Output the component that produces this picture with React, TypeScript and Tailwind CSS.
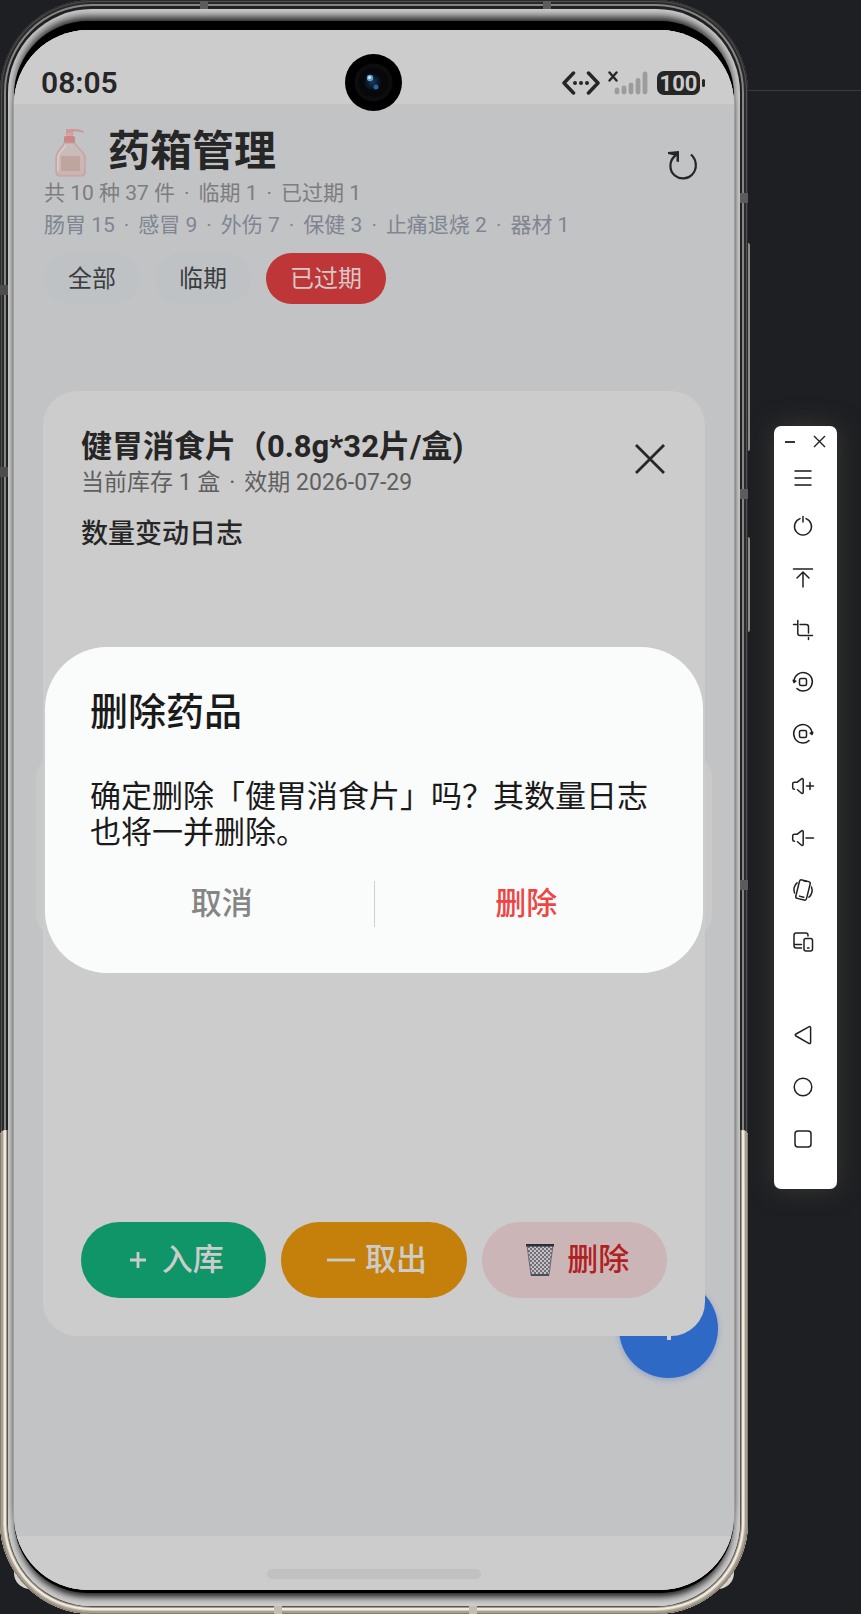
import clsx from 'clsx';
import type { ReactNode } from 'react';

const summary = ['共 10 种 37 件', '临期 1', '已过期 1'];
const categories = [
  '肠胃 15',
  '感冒 9',
  '外伤 7',
  '保健 3',
  '止痛退烧 2',
  '器材 1',
];
const stock = ['当前库存 1 盒', '效期 2026-07-29'];
const filters = ['全部', '临期', '已过期'];

function DotList({ items, className }: { items: string[]; className: string }) {
  return (
    <p className={clsx('flex gap-[9px] whitespace-nowrap leading-8', className)}>
      {items.map((item, i) => (
        <span key={item} className="flex gap-[9px]">
          {i > 0 && <span>·</span>}
          <span>{item}</span>
        </span>
      ))}
    </p>
  );
}

function LotionIcon() {
  return (
    <svg width="42" height="50" viewBox="0 0 42 50" aria-hidden="true">
      <defs>
        <linearGradient id="lotion" x1="0" y1="0" x2="0" y2="1">
          <stop offset="0" stopColor="#c9bdbb" />
          <stop offset="1" stopColor="#cdb3b0" />
        </linearGradient>
      </defs>
      <path d="M22 2h8c4 0 8 .800 10 2.500l-1 1.500c-3-1.500-6-1.800-10-1.500v4h-7z" fill="#cc9a98" />
      <rect x="23" y="6" width="5" height="5" fill="#d3a5a3" />
      <rect x="20" y="9" width="11" height="7" rx="1.500" fill="#c78886" />
      <path
        d="M20 16h11c1 5 10 8 10 15v14c0 2.500-1.500 4-4 4H16c-2.500 0-4-1.500-4-4V31c0-7 7-10 8-15z"
        fill="url(#lotion)"
        stroke="#c79d9a"
        strokeWidth="1.200"
      />
      <path d="M14 44V31c0-6 6-9 8-13" fill="none" stroke="#d8d0ce" strokeWidth="1.500" />
      <rect x="17" y="29" width="19" height="15" fill="#bfa5a0" />
    </svg>
  );
}

function TrashIcon() {
  return (
    <svg width="30" height="34" viewBox="0 0 30 34" aria-hidden="true">
      <defs>
        <pattern id="mesh" width="4" height="4" patternUnits="userSpaceOnUse">
          <path d="M0 0l4 4M4 0L0 4" stroke="#555b66" strokeWidth="0.800" />
        </pattern>
      </defs>
      <path d="M2 2h26l-4 30H6z" fill="#cbbfc3" />
      <path d="M2 2h26l-4 30H6z" fill="url(#mesh)" stroke="#666c77" />
      <path d="M1 1h28v2.500H1z" fill="#2b3038" />
      <path d="M6 32h18" stroke="#4a4f58" strokeWidth="2" />
    </svg>
  );
}

function StatusBar() {
  return (
    <div className="relative flex h-[74px] items-center justify-between bg-[#cccccc] pt-8 pr-[29px] pl-[27px]">
      <span className="text-[30px] leading-none font-semibold text-[#262626]">08:05</span>
      <div className="flex items-center">
        <svg width="38" height="24" viewBox="0 0 38 24" aria-hidden="true">
          <path
            d="M11.500 2L2 12l9.500 10M26.500 2L36 12l-9.500 10"
            fill="none"
            stroke="#262626"
            strokeWidth="3.500"
            strokeLinecap="round"
            strokeLinejoin="round"
          />
          <g fill="#262626">
            <circle cx="13" cy="12" r="2" />
            <circle cx="19" cy="12" r="2" />
            <circle cx="25" cy="12" r="2" />
          </g>
        </svg>
        <svg className="ml-2" width="40" height="24" viewBox="0 0 40 24" aria-hidden="true">
          <path d="M1.500 1.500l7 8M8.500 1.500l-7 8" stroke="#262626" strokeWidth="2.400" strokeLinecap="round" />
          <g stroke="#9c9c9c" strokeWidth="4.800" strokeLinecap="round">
            <path d="M9 19v2M16 17v4M23 14v7M30 9.500V21M37 3v18" />
          </g>
        </svg>
        <span className="ml-[9px] flex h-6 w-[43px] items-center justify-center rounded-[7px] bg-[#262626] text-[22px] font-bold text-[#cccccc]">
          100
        </span>
        <span className="ml-0.5 h-2 w-[3px] rounded-sm bg-[#262626]" />
      </div>
      <div className="absolute top-6 left-1/2 z-10 -ml-[29px] size-[57px]">
        <svg viewBox="0 0 57 57" aria-hidden="true">
          <defs>
            <radialGradient id="lens">
              <stop offset="0" stopColor="#17385c" />
              <stop offset="0.600" stopColor="#0c1c30" />
              <stop offset="1" stopColor="#07090d" />
            </radialGradient>
          </defs>
          <circle cx="28.500" cy="28.500" r="28.500" fill="#000" />
          <circle cx="28.500" cy="28.500" r="19" fill="#0c0d0f" />
          <circle cx="28.500" cy="28.500" r="15" fill="#07080a" />
          <circle cx="27.500" cy="28" r="9" fill="url(#lens)" />
          <circle cx="25" cy="24" r="3.200" fill="#5f9fd0" />
          <circle cx="24.500" cy="23.500" r="1.500" fill="#cfeaf8" />
          <circle cx="31" cy="33" r="2.500" fill="#2c64a0" />
        </svg>
      </div>
    </div>
  );
}

function CabinetPage() {
  return (
    <div className="flex flex-1 flex-col">
      <header className="px-[30px] pt-[22px]">
        <div className="flex">
          <div className="flex-1">
            <h1 className="flex h-[51px] items-center text-[42px] leading-none font-bold text-[#262626]">
              <LotionIcon />
              <span className="ml-[22px]">药箱管理</span>
            </h1>
            <DotList items={summary} className="text-[21px] text-[#7d7d7d]" />
          </div>
          <button className="flex h-20 w-[42px] items-center justify-center" aria-label="刷新">
            <svg width="32" height="32" viewBox="0 0 32 32" aria-hidden="true">
              <path
                d="M9 5C2 10 1.500 20.500 8 25.700c5 4 12.500 3.600 17-1 5.500-5.500 5-14.700-1-20.200"
                fill="none"
                stroke="#262626"
                strokeWidth="2.200"
              />
              <path d="M1 2L12 1v11L9.500 11.500V6L1 4z" fill="#262626" />
            </svg>
          </button>
        </div>
        <DotList items={categories} className="text-[21px] text-[#7f8591]" />
        <div className="mt-3 flex gap-[15px]">
          {filters.map((name, i) => (
            <button
              key={name}
              className={clsx(
                'h-[51px] rounded-full px-6 text-2xl',
                i === 2 ? 'bg-[#be3637] text-[#d6c8c8]' : 'bg-[#bfc2c4] text-[#3c3d3f]',
              )}
            >
              {name}
            </button>
          ))}
        </div>
      </header>
      <div className="flex flex-1 flex-col justify-center px-[22px] pb-[148px]">
        <div className="h-[184px] rounded-3xl bg-[#c9c9ca]" />
      </div>
      <button
        className="absolute right-4 bottom-[158px] flex size-[99px] items-center justify-center rounded-full bg-[#2f69c6] shadow-[0_2px_6px_#8fa3c8]"
        aria-label="新增药品"
      >
        <svg width="30" height="30" viewBox="0 0 30 30" aria-hidden="true">
          <path d="M15 4v22M4 15h22" stroke="#cccccc" strokeWidth="4" />
        </svg>
      </button>
    </div>
  );
}

function DetailSheet() {
  return (
    <div className="absolute inset-0 flex px-[29px] pt-[287px] pb-[200px]">
      <section className="flex flex-1 flex-col rounded-[34px] bg-[#cccccc] px-[38px] pt-9 pb-[38px]">
        <div className="flex items-start justify-between">
          <div className="whitespace-nowrap">
            <h2 className="text-[31px] leading-10 font-bold text-[#262626]">
              健胃消食片（0.8g*32片/盒)
            </h2>
            <DotList items={stock} className="text-[23px] text-[#5f5f5f]" />
          </div>
          <button className="flex h-16 w-[34px] items-center justify-center" aria-label="关闭">
            <svg width="30" height="30" viewBox="0 0 30 30" aria-hidden="true">
              <path d="M1 1l28 28M29 1L1 29" stroke="#262626" strokeWidth="2.800" />
            </svg>
          </button>
        </div>
        <h3 className="mt-[17px] text-[27px] leading-9 font-medium text-[#262626]">数量变动日志</h3>
        <div className="mt-auto flex gap-[15px] text-[31px] font-medium">
          <button className="flex h-[76px] flex-1 items-center justify-center gap-4 rounded-full bg-[#109568] pl-1.5 text-[#cccccc]">
            <svg width="16" height="16" viewBox="0 0 16 16" aria-hidden="true">
              <path d="M8 0v16M0 8h16" stroke="currentColor" strokeWidth="2.800" />
            </svg>
            入库
          </button>
          <button className="flex h-[76px] flex-1 items-center justify-center gap-2.5 rounded-full bg-[#c4800a] pl-1.5 text-[#cccccc]">
            <svg width="28" height="16" viewBox="0 0 28 16" aria-hidden="true">
              <path d="M0 8h28" stroke="currentColor" strokeWidth="2.800" />
            </svg>
            取出
          </button>
          <button className="flex h-[76px] flex-1 items-center justify-center gap-3 rounded-full bg-[#cbb5b7] pl-1.5 text-[#b12020]">
            <TrashIcon />
            删除
          </button>
        </div>
      </section>
    </div>
  );
}

function DeleteDialog() {
  return (
    <div className="absolute inset-0 flex items-center px-[31px]">
      <div
        role="alertdialog"
        aria-labelledby="delete-title"
        className="flex-1 rounded-[62px] bg-[#fafbfb] pt-10 pb-[46px] text-[#1a1a1a]"
      >
        <h2 id="delete-title" className="px-[45px] text-[38px] leading-[50px] font-medium">
          删除药品
        </h2>
        <p className="mt-[42px] px-[45px] text-[31px] leading-9">
          确定删除「健胃消食片」吗？其数量日志也将一并删除。
        </p>
        <div className="mt-[30px] flex h-[46px] px-[25px] text-[31px] font-medium">
          <button className="flex-1 text-[#858585]">取消</button>
          <span className="w-px bg-[#cfcfcf]" />
          <button className="flex-1 text-[#f04444]">删除</button>
        </div>
      </div>
    </div>
  );
}

function Phone() {
  return (
    <div className="relative flex flex-1">
      {/* window corners that peek out under the shell */}
      <div className="absolute inset-x-[14px] bottom-[25px] h-10 rounded-b-2xl bg-[#d4d4d0]" />
      <div className="relative flex flex-1 rounded-[92px] bg-[#262626] px-2 pt-[9px] pb-2 shadow-[inset_0_0_0_1px_#2b2c2e,inset_0_0_0_2px_#505050,inset_0_0_0_4px_#2a2a2a,inset_0_0_0_6px_#858585,inset_0_0_0_8px_#202020]">
        <div className="absolute inset-x-0 bottom-0 h-[30%] overflow-hidden rounded-t-md">
          <div className="absolute inset-x-0 -top-24 bottom-0 rounded-[92px] bg-[#c9c9c9] shadow-[inset_0_0_0_1px_#857d70,inset_0_0_0_3px_#a89f90,inset_0_0_0_4px_#d0c8bb,inset_0_0_0_6px_#f0ebe1,inset_0_0_0_7px_#a39a8b,inset_0_0_0_8px_#5a554d]" />
        </div>
        <span className="absolute top-px left-[200px] h-2 w-2 bg-[#5c5c5c]" />
        <span className="absolute top-px right-[197px] h-2 w-2 bg-[#5c5c5c]" />
        <span className="absolute top-[285px] left-0 h-2.5 w-2 bg-[#4c4c4c]" />
        <span className="absolute top-[467px] left-0 h-2.5 w-2 bg-[#4c4c4c]" />
        <span className="absolute top-[193px] right-0 h-2.5 w-2 bg-[#5c5c5c]" />
        <span className="absolute top-[489px] right-0 h-2.5 w-2 bg-[#5c5c5c]" />
        <span className="absolute top-[880px] right-0 h-2.5 w-2 bg-[#5c5c5c]" />
        <span className="absolute bottom-0 left-[274px] h-2 w-2 bg-[#c5beb0]" />
        <span className="absolute right-[271px] bottom-0 h-2 w-2 bg-[#c5beb0]" />
        <div className="relative flex flex-1 overflow-hidden rounded-[84px] bg-[#cdcdcd] px-1.5 pt-[21px] pb-4">
          <div className="relative flex flex-1 rounded-[74px] shadow-[0_-9px_0_#000000,0_3px_0_#000000,-1px_0_0_#a0a0a0,1px_0_0_#a0a0a0,0_-15px_8px_-2px_#1c1c1c,0_9px_7px_-2px_#1c1c1c]">
            <div className="relative flex flex-1 flex-col overflow-hidden rounded-[74px] bg-[#c2c3c5]">
              <StatusBar />
              <main className="relative flex flex-1 flex-col">
                <CabinetPage />
                <DetailSheet />
              </main>
              <div className="flex h-[54px] justify-center bg-[#cccccc] pt-[33px]">
                <span className="h-2.5 w-[214px] rounded-full bg-[#c1c1c1]" />
              </div>
              <DeleteDialog />
            </div>
          </div>
        </div>
      </div>
      <span className="absolute top-[243px] -right-0.5 h-[208px] w-0.5 rounded-r-sm bg-[#8c8c88]" />
      <span className="absolute top-[537px] -right-0.5 h-[95px] w-0.5 rounded-r-sm bg-[#8c8c88]" />
    </div>
  );
}

function Tool({ label, className, children }: { label: string; className?: string; children: ReactNode }) {
  return (
    <button
      aria-label={label}
      className={clsx('flex w-full items-center justify-center pr-[5px]', className ?? 'h-[52px]')}
    >
      <svg
        width="24"
        height="24"
        viewBox="0 0 24 24"
        fill="none"
        stroke="#202020"
        strokeWidth="1.500"
        strokeLinecap="round"
        strokeLinejoin="round"
        aria-hidden="true"
      >
        {children}
      </svg>
    </button>
  );
}

function Toolbar() {
  return (
    <div className="mr-6 ml-[26px] rounded-[7px] bg-white pb-6 shadow-[0_0_24px_#383836]">
      <div className="flex h-[30px] items-center justify-between pr-[11px] pl-[11px]">
        <button aria-label="最小化">
          <svg width="10" height="10" viewBox="0 0 10 10" aria-hidden="true">
            <path d="M0 6h10" stroke="#202020" strokeWidth="1.800" />
          </svg>
        </button>
        <button aria-label="关闭">
          <svg width="13" height="13" viewBox="0 0 13 13" aria-hidden="true">
            <path d="M1 1l11 11M12 1L1 12" stroke="#202020" strokeWidth="1.400" />
          </svg>
        </button>
      </div>
      <Tool label="菜单" className="h-11">
        <path d="M3.500 5h17M3.500 12h17M3.500 19h17" stroke="#505050" strokeWidth="1.800" strokeLinecap="butt" />
      </Tool>
      <Tool label="电源">
        <path d="M12 2.500v5.500M9 4.600a8.500 8.500 0 1 0 6 0" />
      </Tool>
      <Tool label="置顶">
        <path d="M2.500 3h19M12 6.500V21M6 12l6-6 6 6" />
      </Tool>
      <Tool label="截屏">
        <path d="M2.500 6.500h3M6.800 2.500v12.700c0 1.300 1 2.300 2.300 2.300h12.400M9 6.500h6.200c1.300 0 2.300 1 2.300 2.300v6.200M17.500 19.500v2" />
      </Tool>
      <Tool label="向左旋转">
        <path d="M3 11a9.200 9.200 0 1 1 3 7.600" />
        <path d="M2.200 10.200l.800 2.300 1.800-1.400z" fill="#202020" />
        <rect x="8.500" y="8.500" width="7" height="7" rx="1.500" />
      </Tool>
      <Tool label="向右旋转">
        <path d="M21 11a9.200 9.200 0 1 0-3 7.600" />
        <path d="M21.800 10.200l-.800 2.300-1.800-1.400z" fill="#202020" />
        <rect x="8.500" y="8.500" width="7" height="7" rx="1.500" />
      </Tool>
      <Tool label="音量加">
        <path d="M3.500 15.300c-1.300 0-1.800-.500-1.800-1.500v-4c0-1 .500-1.500 1.800-1.500H6l4.500-3.500c.800-.600 1.700-.200 1.700.800v12.800c0 1-.900 1.400-1.700.800L6.500 15.700M15.500 12h7M19 8.500v7" />
      </Tool>
      <Tool label="音量减">
        <path d="M3.500 15.300c-1.300 0-1.800-.500-1.800-1.500v-4c0-1 .500-1.500 1.800-1.500H6l4.500-3.500c.800-.600 1.700-.200 1.700.800v12.800c0 1-.900 1.400-1.700.800L6.500 15.700M15 12h7.500" />
      </Tool>
      <Tool label="摇一摇">
        <g transform="rotate(14 12 12)">
          <rect x="6.500" y="2.500" width="11" height="19" rx="2" />
          <path d="M10 18.800h4.500M10.500 2.800h3" />
          <path d="M4.500 6.500c-2.200 3-2.200 7.500 0 10.500M19.500 7c2.200 3 2.200 7.500 0 10.500" />
        </g>
      </Tool>
      <Tool label="多设备">
        <path d="M10.500 18H5.200c-1.300 0-2.200-1-2.200-2.200V5.200C3 4 4 3 5.200 3h9.600C16 3 17 4 17 5.200V6M3.500 14.500h7" />
        <rect x="13" y="8.500" width="8.500" height="12.500" rx="2" />
        <path d="M16.500 18h1.500" />
      </Tool>
      <Tool label="返回" className="mt-[41px] h-[52px]">
        <path d="M17.800 3.800c1-.500 1.800-.200 1.800 1v14.500c0 1.200-.800 1.600-1.800 1L5 13c-1-.600-1-1.400 0-2z" />
      </Tool>
      <Tool label="主页">
        <circle cx="12" cy="12" r="8.800" />
      </Tool>
      <Tool label="最近任务">
        <rect x="4" y="4" width="16" height="16" rx="3" />
      </Tool>
    </div>
  );
}

export default function App() {
  return (
    <div className="flex min-h-screen bg-[#1e1f22] font-['Roboto','Noto_Sans_CJK_SC',sans-serif]">
      <Phone />
      <aside className="w-[113px]">
        <div className="h-[91px] border-b border-[#3b3c40]" />
        <div className="pt-[335px]">
          <Toolbar />
        </div>
      </aside>
    </div>
  );
}
